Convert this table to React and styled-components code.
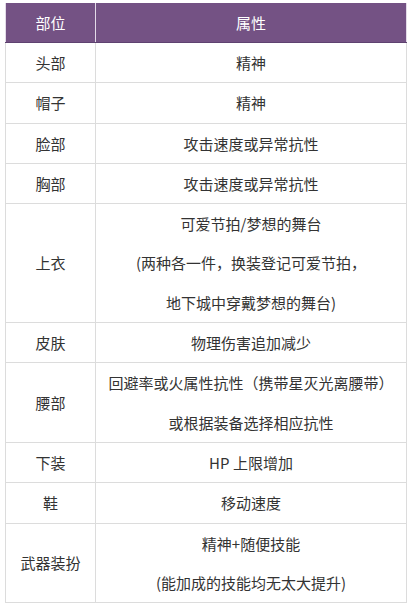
import React from "react";
import styled, {createGlobalStyle} from "styled-components";

const GlobalStyle = createGlobalStyle`
   html, body {
      margin: 0;
      padding: 0;
      background: #ffffff;
   }
   body {
      font-family: "Noto Sans CJK SC", "Noto Sans", sans-serif;
      color: #333333;
   }
`;

const Page = styled.div`
   padding: 3px 5px 0 5px;
`;

const Table = styled.table`
   width: 402px;
   border-collapse: collapse;
   table-layout: fixed;
   font-size: 15px;
`;

const HeadCell = styled.th`
   background: #745284;
   color: #ffffff;
   font-weight: normal;
   height: 39px;
   padding: 0;
   text-align: center;
   border: 1px solid #e3dbe8;
   border-top: none;
   border-bottom: 1px solid #5e4270;
   width: ${p => (p.$narrow ? "89px" : "auto")};
`;

const Cell = styled.td`
   text-align: center;
   vertical-align: middle;
   padding: 0;
   line-height: 39.3px;
   border: 1px solid #dcdcdc;
   color: #333333;
`;

const Line = styled.div`
   white-space: nowrap;
`;

const rows = [
   {part: "头部", attrs: ["精神"]},
   {part: "帽子", attrs: ["精神"]},
   {part: "脸部", attrs: ["攻击速度或异常抗性"]},
   {part: "胸部", attrs: ["攻击速度或异常抗性"]},
   {
      part: "上衣",
      attrs: [
         "可爱节拍/梦想的舞台",
         "(两种各一件，换装登记可爱节拍，",
         "地下城中穿戴梦想的舞台)",
      ],
   },
   {part: "皮肤", attrs: ["物理伤害追加减少"]},
   {
      part: "腰部",
      attrs: ["回避率或火属性抗性（携带星灭光离腰带）", "或根据装备选择相应抗性"],
   },
   {part: "下装", attrs: ["HP 上限增加"]},
   {part: "鞋", attrs: ["移动速度"]},
   {part: "武器装扮", attrs: ["精神+随便技能", "(能加成的技能均无太大提升)"]},
];

function App() {
   return (
      <Page>
         <GlobalStyle />
         <Table>
            <thead>
               <tr>
                  <HeadCell $narrow>部位</HeadCell>
                  <HeadCell>属性</HeadCell>
               </tr>
            </thead>
            <tbody>
               {rows.map(row => (
                  <tr key={row.part}>
                     <Cell>{row.part}</Cell>
                     <Cell>
                        {row.attrs.map(text => (
                           <Line key={text}>{text}</Line>
                        ))}
                     </Cell>
                  </tr>
               ))}
            </tbody>
         </Table>
      </Page>
   );
}

export default App;
